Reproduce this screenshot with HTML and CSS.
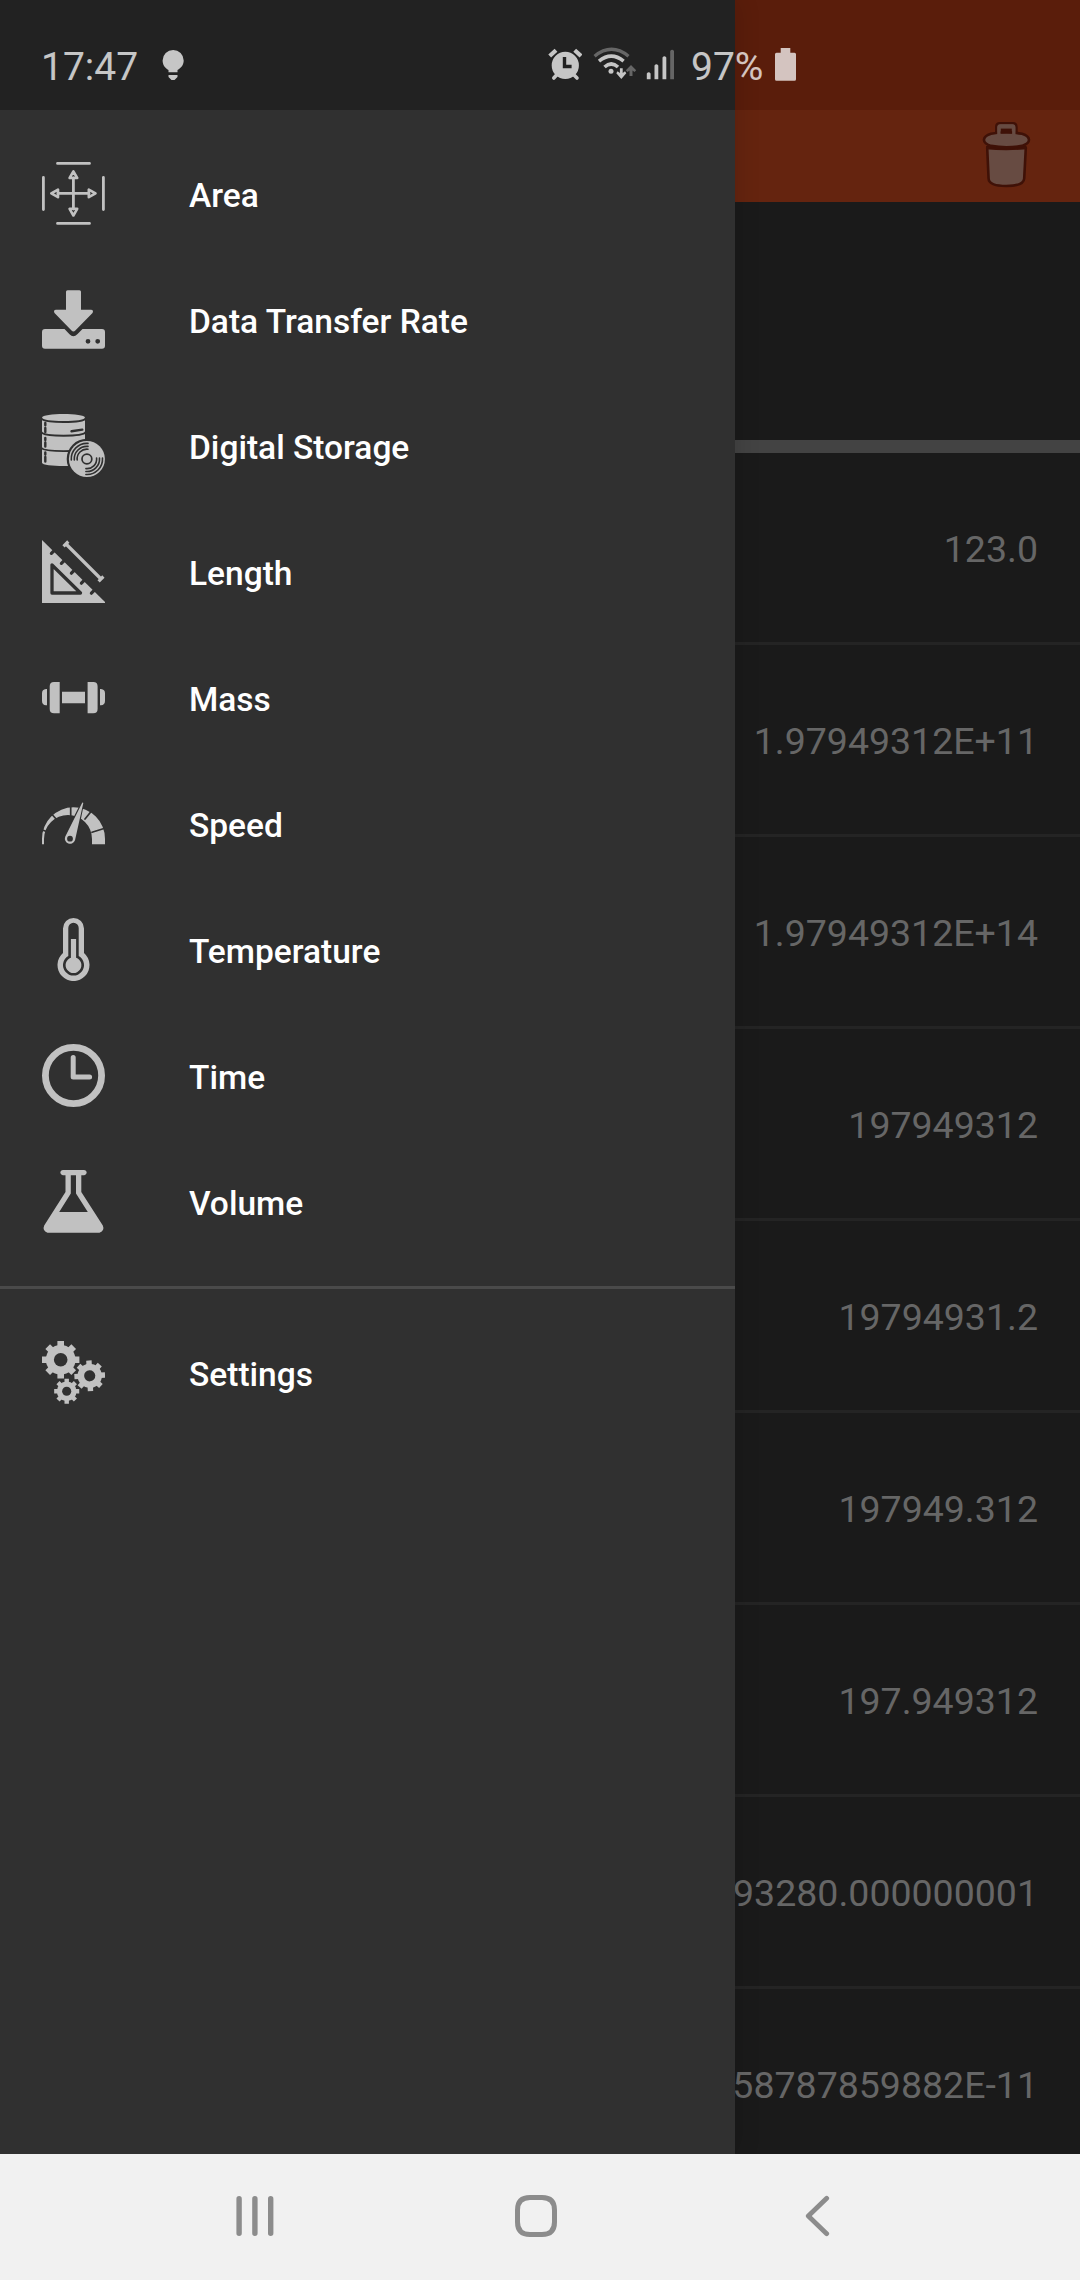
FILE: index.html
```html
<!DOCTYPE html>
<html lang="en">
<head>
<meta charset="utf-8">
<title>Unit Converter</title>
<link rel="stylesheet" href="styles.css">
</head>
<body>
<div class="screen">
  <div class="app">
    <main class="content">
      <div class="content-status"></div>
      <header class="toolbar">
        <svg class="trash" viewBox="982 120 50 70">
          <path class="trash-line" d="M987.200 148 L988.600 178.500Q988.800 186 1006.300 186T1024.200 178.500L1025.800 148Z"/>
          <path class="trash-gap" d="M986 146H1026.600V149Q1006.300 151.500 986 149Z"/>
          <path class="trash-line" d="M996.300 136V127Q996.300 123.300 1000 123.300H1012.800Q1016.400 123.300 1016.400 127V136Z"/>
          <path class="trash-line" d="M983.900 139.800Q984.300 135.800 991 133.800 1006.500 130.800 1022 133.800 1028.700 135.800 1029 139.800 1029 143.800 1022 145.900 1006.500 148.600 991 145.900 984 143.800 983.900 139.800Z"/>
          <path class="trash-handle" d="M998.900 136V127.400Q998.900 126 1000.400 126H1012.300Q1013.800 126 1013.800 127.400V136"/>
          <rect class="trash-gap" x="1000.800" y="128.600" width="11" height="4.900"/>
        </svg>
      </header>
      <section class="input"></section>
      <ul class="values">
        <li>123.0</li>
        <li>1.97949312E+11</li>
        <li>1.97949312E+14</li>
        <li>197949312</li>
        <li>19794931.2</li>
        <li>197949.312</li>
        <li>197.949312</li>
        <li>93280.000000001</li>
        <li>58787859882E-11</li>
      </ul>
    </main>

    <nav class="drawer">
      <div class="drawer-status"></div>
      <ul class="menu">
        <li>
          <svg class="icon line" viewBox="0 0 63 63"><path stroke-width="2.800" d="M15.500 1.400H47.500M15.500 61.400H47.500M1.400 15.500V47.500M61.400 15.500V47.500M31.400 16V47M16 31.400H47"/><path stroke-width="2.600" d="M31.400 9.300 27.600 16H35.200ZM31.400 53.500 27.600 46.800H35.200ZM9.300 31.400 16 27.600V35.200ZM53.500 31.400 46.800 27.600V35.200Z"/></svg>
          <span>Area</span>
        </li>
        <li>
          <svg class="icon" viewBox="0 0 63 63"><path d="M25.500 2.300H37.500Q39 2.300 39 3.800V21.700H49Q52 22 50.500 25L33.300 42.500Q31.400 44.300 29.500 42.500L12.500 25Q11 22 14 21.700H24V3.800Q24 2.300 25.500 2.300Z"/><path fill-rule="evenodd" d="M3 41H22.500L27.500 46.300Q31.400 50 35.300 46.300L40.500 41H60Q63 41 63 44V57.700Q63 60.700 60 60.700H3Q0 60.700 0 57.700V44Q0 41 3 41ZM46 50.900A2.400 2.400 0 1 0 46 55.700 2.400 2.400 0 1 0 46 50.900ZM55.700 50.900A2.400 2.400 0 1 0 55.700 55.700 2.400 2.400 0 1 0 55.700 50.900Z"/></svg>
          <span>Data Transfer Rate</span>
        </li>
        <li>
          <svg class="icon" viewBox="0 0 63 63">
            <path d="M0 3.700C0-1.200 43-1.200 43 3.700V48.700C43 53 0 53 0 48.700Z"/>
            <path class="cut" stroke-width="1.900" d="M-.5 4.500C2 9.100 41 9.100 43.500 4.500M-.5 18.300C2 22.800 41 22.800 43.500 18.300M-.5 34C2 38.100 41 38.100 43.500 34"/>
            <path class="cut" stroke-width="2.400" stroke-linecap="butt" d="M3.300 9V11.200M3.300 14V18M3.300 24V26M3.300 28.500V32.500M3.300 38.500V40.500M3.300 43V47.500M29.500 17.200 40.300 15.600"/>
            <circle class="hole" cx="44.900" cy="45" r="20.200"/>
            <circle cx="44.900" cy="45" r="18"/>
            <circle class="cut" cx="44.900" cy="45" r="4.900" stroke-width="1.700"/>
            <path class="cut" stroke-width="1.600" stroke-linecap="butt" d="M29.300 46A15.500 15.500 0 0 1 46 29.400M32.300 46A12.600 12.600 0 0 1 46 32.400M35.200 46A9.700 9.700 0 0 1 46 35.200M60.500 44A15.500 15.500 0 0 1 43.900 60.500M57.500 44A12.600 12.600 0 0 1 43.900 57.500M54.600 44A9.700 9.700 0 0 1 43.900 54.600"/>
          </svg>
          <span>Digital Storage</span>
        </li>
        <li>
          <svg class="icon" viewBox="0 0 63 63">
            <path d="M0 0 63 62V63H0Z"/>
            <path class="cut" stroke-width="3.200" d="M9.400 13.300 12.400 10.300M19.400 23.300 22.400 20.300M29.400 33.200 32.400 30.200M39.400 43.200 42.400 40.200M49.400 53.200 52.400 50.200"/>
            <path class="cut" stroke-width="3.300" d="M10 25V53H38.500Z"/>
            <path class="bright" stroke-width="3.200" d="M24 4 59 39M21.500 6.300 26.300 1.500M56.600 41.300 61.400 36.500"/>
          </svg>
          <span>Length</span>
        </li>
        <li>
          <svg class="icon" viewBox="0 0 63 63"><path d="M17.700 16V47.300H12Q7.700 47.300 7.700 43V20.300Q7.700 16 12 16ZM5 23V39.300H4Q0 39 0 35V27.300Q0 23.300 4 23ZM20 25.700H43V37.300H20ZM45.600 16H51.300Q55.600 16 55.600 20.300V43Q55.600 47.300 51.300 47.300H45.600ZM58 23H59Q63 23.300 63 27.300V35Q63 39 59 39.300H58Z"/></svg>
          <span>Mass</span>
        </li>
        <li>
          <svg class="icon" viewBox="0 0 63 63">
            <path d="M0 52.300V46.800A31.500 31.500 0 0 1 63 46.800V52.300H50V47A24 24 0 0 0 2 47V52.300Z"/>
            <path class="cut" stroke-width="1.700" stroke-linecap="butt" d="M-1 37.500 6 40M10.500 23 15 28M28.700 14V25M49.500 19 43 27M62 36.500 50 40.300"/>
            <path class="cut" stroke-width="3" d="M40.700 10.700 23 45.500A5.200 5.200 0 0 0 33 48.200Z"/>
            <path fill-rule="evenodd" d="M40.200 10.700Q41 10 41.300 11L33 48.300A5.200 5.200 0 1 1 23.200 44.700ZM28 43.800A2.900 2.900 0 1 0 28 49.600 2.900 2.900 0 1 0 28 43.800Z"/>
          </svg>
          <span>Speed</span>
        </li>
        <li>
          <svg class="icon" viewBox="0 0 63 63">
            <path d="M21 10.500A10.500 10.500 0 0 1 42 10.500V35A16 16 0 1 1 21 35Z"/>
            <path class="hole" d="M26.300 10A5.200 5.200 0 0 1 36.700 10V38A10.500 10.500 0 1 1 26.300 38Z"/>
            <path d="M28.900 21H34.100V39.700A7.900 7.900 0 1 1 28.900 39.700Z"/>
          </svg>
          <span>Temperature</span>
        </li>
        <li>
          <svg class="icon line" viewBox="0 0 63 63"><circle cx="31.500" cy="31.500" r="28.100" stroke-width="6.800"/><path stroke-width="5" d="M31.200 13.500V33H47.600"/></svg>
          <span>Time</span>
        </li>
        <li>
          <svg class="icon" viewBox="0 0 63 63"><path fill-rule="evenodd" d="M20.800 0H42.200Q44.700 .3 44.700 2.600T42.200 5.200H39.300V22L60.800 55.500Q63 60.500 57.500 62.800H5.500Q0 60.500 2.200 55.500L23.500 22V5.200H20.800Q18.300 5 18.300 2.600T20.800 0ZM28.800 5.200V23.500L17.200 42H45.800L34 23.500V5.200Z"/></svg>
          <span>Volume</span>
        </li>
      </ul>
      <ul class="menu menu-extra">
        <li>
          <svg class="icon" viewBox="0 0 63 63">
            <defs>
              <g id="gear">
                <circle r="14.800"/>
                <path class="bright" stroke-width="6.600" d="M0-18.700V18.700M-18.700 0H18.700M-13-13 13 13M-13 13 13-13"/>
                <circle class="hole" r="6.800"/>
              </g>
            </defs>
            <use href="#gear" transform="translate(18.700 18.700)"/>
            <use href="#gear" transform="translate(47.700 34.800) rotate(-3) scale(.82)"/>
            <use href="#gear" transform="translate(24.700 50.300) scale(.67)"/>
          </svg>
          <span>Settings</span>
        </li>
      </ul>
    </nav>

    <div class="status">
      <span class="clock">17:47</span>
      <svg class="bulb" viewBox="182 49 23 32"><path d="M182.600 60.500A10.500 10.500 0 0 1 203.700 60.500C203.700 65 201 68 197.500 70V72.200H188.500V70C185 68 182.600 65 182.600 60.500ZM188.500 75H197.500V77L194.500 80H191.500L188.500 77Z"/></svg>
      <svg class="alarm" viewBox="548 48 34 34"><path class="status-line" stroke-width="4.200" d="M549.700 56 556 50.300M581 56 574.700 50.300"/><path class="status-line" stroke-width="3.600" stroke-linecap="round" d="M553.800 78 557 74.500M577 78 573.500 74.500"/><path fill-rule="evenodd" d="M565.300 51.800A13.600 13.600 0 1 1 565.300 79 13.600 13.600 0 1 1 565.300 51.800ZM562.800 57V68.200H571.600V64.800H566.200V57Z"/></svg>
      <svg class="wifi" viewBox="592 46 46 36"><path class="status-line dim" stroke-width="3.400" d="M594.600 56.200Q611.500 42.500 628.500 56.200"/><path class="status-line" stroke-width="3.600" d="M599 61.200Q611.300 51.200 623.600 61.200M604.500 67Q611.300 61 618 67"/><circle cx="611" cy="71.300" r="2.500"/><path d="M619.900 68.300H622.700V73L625 71.300 626.300 73.300 621.300 79 616.300 73.300 617.600 71.300 619.900 73Z"/><path class="dim" d="M629.500 76V70.500L627.500 72 625.800 70.200 631 65 636.200 70.200 634.500 72 632.500 70.500V76Z"/></svg>
      <svg class="signal" viewBox="646 48 30 32"><path d="M646.800 73.500Q648.700 71 650.600 73.500V79.300H646.800ZM654.500 65.500Q656.400 63 658.300 65.500V79.300H654.500ZM662.500 57.500Q664.400 55 666.300 57.500V79.300H662.500Z"/><path class="dim" d="M670.200 51Q672.100 48.500 674 51V79.300H670.200Z"/></svg>
      <span class="percent">97%</span>
      <svg class="battery" viewBox="775 48 21 33"><path d="M780.700 48H790.300V52.700H794.500Q796 52.700 796 54.200V79.200Q796 80.700 794.500 80.700H776.500Q775 80.700 775 79.200V54.200Q775 52.700 776.500 52.700H780.700Z"/></svg>
    </div>
  </div>

  <footer class="navbar">
    <svg viewBox="0 0 42 42"><path stroke-width="5.400" d="M6.100 3.700V38.300M21.900 3.700V38.300M37.700 3.700V38.300"/></svg>
    <svg viewBox="0 0 42 42"><path stroke-width="5" d="M15 2.500H27Q39.500 2.500 39.500 15V27Q39.500 39.500 27 39.500H15Q2.500 39.500 2.500 27V15Q2.500 2.500 15 2.500Z"/></svg>
    <svg viewBox="0 0 42 42"><path stroke-width="4.800" stroke-linejoin="round" d="M29.700 3.300 11.300 21 29.700 38.700"/></svg>
  </footer>
</div>
</body>
</html>
```
FILE: styles.css
```css
* {
  box-sizing: border-box;
}

body {
  margin: 0;
  font-family: Roboto, "Noto Sans", sans-serif;
}

ul {
  list-style: none;
  margin: 0;
  padding: 0;
}

.screen {
  display: flex;
  flex-direction: column;
  width: 1080px;
  height: 2280px;
  overflow: hidden;
}

.app {
  position: relative;
  flex: 1;
  min-height: 0;
  overflow: hidden;
}

/* Converter page, dimmed behind the open drawer */
.content {
  background: #1a1a1a;
}

.content-status {
  height: 110px;
  background: #5a1d0b;
}

.toolbar {
  display: flex;
  justify-content: flex-end;
  height: 92px;
  padding: 10px 48px 0 0;
  background: #65240f;
}

.trash {
  width: 50px;
  height: 70px;
}

.trash-line {
  fill: #674b42;
  stroke: #3f1107;
  stroke-width: 2.6;
  stroke-linejoin: round;
}

.trash-gap {
  fill: #3f1107;
}

.trash-handle {
  fill: none;
  stroke: #674b42;
  stroke-width: 3.4;
}

.input {
  height: 251px;
  border-bottom: 13px solid #434343;
}

.values li {
  display: flex;
  align-items: center;
  justify-content: flex-end;
  height: 192px;
  padding: 2px 42px 0 0;
  border-bottom: 3px solid #242424;
  color: #666;
  font-size: 37.5px;
  white-space: nowrap;
}

/* Navigation drawer */
.drawer {
  position: absolute;
  top: 0;
  left: 0;
  width: 735px;
  height: 100%;
  background: #303030;
  box-shadow: 0 0 24px rgba(0, 0, 0, .15);
}

.drawer-status {
  height: 110px;
  background: #222;
}

.menu {
  padding: 21px 0;
}

.menu-extra {
  border-top: 3px solid #4a4a4a;
}

.menu li {
  display: flex;
  align-items: center;
  gap: 84px;
  height: 126px;
  padding: 31px 42px 32px;
  color: #fff;
  font-size: 33.5px;
  font-weight: 500;
}

.menu span {
  padding-top: 4px;
}

.icon {
  flex: none;
  width: 63px;
  height: 63px;
  fill: #c1c1c1;
}

.line {
  fill: none;
  stroke: #c1c1c1;
  stroke-linecap: round;
  stroke-linejoin: round;
}

.bright {
  fill: none;
  stroke: #c1c1c1;
}

.cut {
  fill: none;
  stroke: #303030;
  stroke-linecap: round;
  stroke-linejoin: round;
}

.hole {
  fill: #303030;
}

/* System status bar, drawn over both layers */
.status {
  position: absolute;
  top: 0;
  left: 0;
  display: flex;
  align-items: flex-start;
  width: 100%;
  height: 110px;
  padding: 42px 0 0 41px;
  color: #fff;
  fill: #fff;
  font-size: 39px;
  line-height: 50px;
  opacity: .74;
}

.clock {
  width: 121px;
}

.bulb {
  width: 23px;
  height: 32px;
  margin-top: 7px;
}

.alarm {
  width: 34px;
  height: 34px;
  margin: 6px 10px 0 363px;
}

.wifi {
  width: 46px;
  height: 36px;
  margin: 4px 8px 0 0;
}

.signal {
  width: 30px;
  height: 32px;
  margin-top: 6px;
}

.percent {
  width: 84px;
  margin-left: 15px;
}

.battery {
  width: 21px;
  height: 33px;
  margin-top: 6px;
}

.status-line {
  fill: none;
  stroke: #fff;
}

.dim {
  opacity: .42;
}

/* System navigation bar */
.navbar {
  display: flex;
  flex: none;
  justify-content: center;
  gap: 240px;
  height: 126px;
  padding: 41px 8px 0 0;
  background: #f1f1f1;
}

.navbar svg {
  width: 42px;
  height: 42px;
  fill: none;
  stroke: #8c8c8c;
  stroke-linecap: round;
}
```
